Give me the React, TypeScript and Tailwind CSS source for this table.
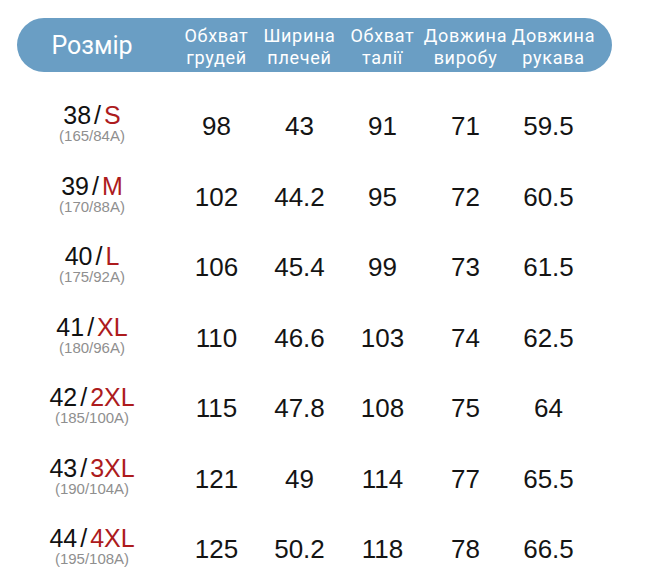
import React from "react";

type Row = {
  num: string;
  size: string;
  body: string;
  values: string[];
};

const rows: Row[] = [
  { num: "38", size: "S", body: "(165/84A)", values: ["98", "43", "91", "71", "59.5"] },
  { num: "39", size: "M", body: "(170/88A)", values: ["102", "44.2", "95", "72", "60.5"] },
  { num: "40", size: "L", body: "(175/92A)", values: ["106", "45.4", "99", "73", "61.5"] },
  { num: "41", size: "XL", body: "(180/96A)", values: ["110", "46.6", "103", "74", "62.5"] },
  { num: "42", size: "2XL", body: "(185/100A)", values: ["115", "47.8", "108", "75", "64"] },
  { num: "43", size: "3XL", body: "(190/104A)", values: ["121", "49", "114", "77", "65.5"] },
  { num: "44", size: "4XL", body: "(195/108A)", values: ["125", "50.2", "118", "78", "66.5"] },
];

const headers = [
  ["Обхват", "грудей"],
  ["Ширина", "плечей"],
  ["Обхват", "талії"],
  ["Довжина", "виробу"],
  ["Довжина", "рукава"],
];

export default function App() {
  return (
    <div className="w-[648px] h-[582px] bg-white overflow-hidden pt-[18px]">
      {/* header bar */}
      <div
        className="ml-[17px] w-[595px] h-[54px] rounded-full bg-[#6a9ec4] flex items-center text-white"
        style={{ fontFamily: "Roboto, 'Noto Sans', sans-serif" }}
      >
        <div className="w-[150px] text-center text-[25px] leading-none">Розмір</div>
        <div className="w-[8px]" />
        {headers.map((h, i) => (
          <div
            key={i}
            className={`w-[83px] pt-[4px] flex flex-col items-center text-[18px] leading-[22px] tracking-[0.7px] ${
              i === 4 ? "pl-[10px]" : ""
            }`}
          >
            <span className="whitespace-nowrap">{h[0]}</span>
            <span className="whitespace-nowrap">{h[1]}</span>
          </div>
        ))}
      </div>

      {/* table rows */}
      <div className="mt-[18px]" style={{ fontFamily: "'Liberation Sans', Arial, sans-serif" }}>
        {rows.map((r) => (
          <div key={r.num} className="h-[70.5px] flex items-center">
            <div className="ml-[17px] w-[150px] flex flex-col items-center -mt-[4px]">
              <div className="text-[25px] leading-[26px] text-[#111] whitespace-nowrap">
                {r.num}
                <span className="mx-[3px]">/</span>
                <span className="text-[#ad1b1d]">{r.size}</span>
              </div>
              <div className="text-[15px] leading-[16px] text-[#8f8f8f]">{r.body}</div>
            </div>
            <div className="w-[8px]" />
            {r.values.map((v, i) => (
              <div key={i} className="w-[83px] text-center text-[26px] text-[#141414] leading-none pt-[2px]">
                {v}
              </div>
            ))}
          </div>
        ))}
      </div>
    </div>
  );
}
